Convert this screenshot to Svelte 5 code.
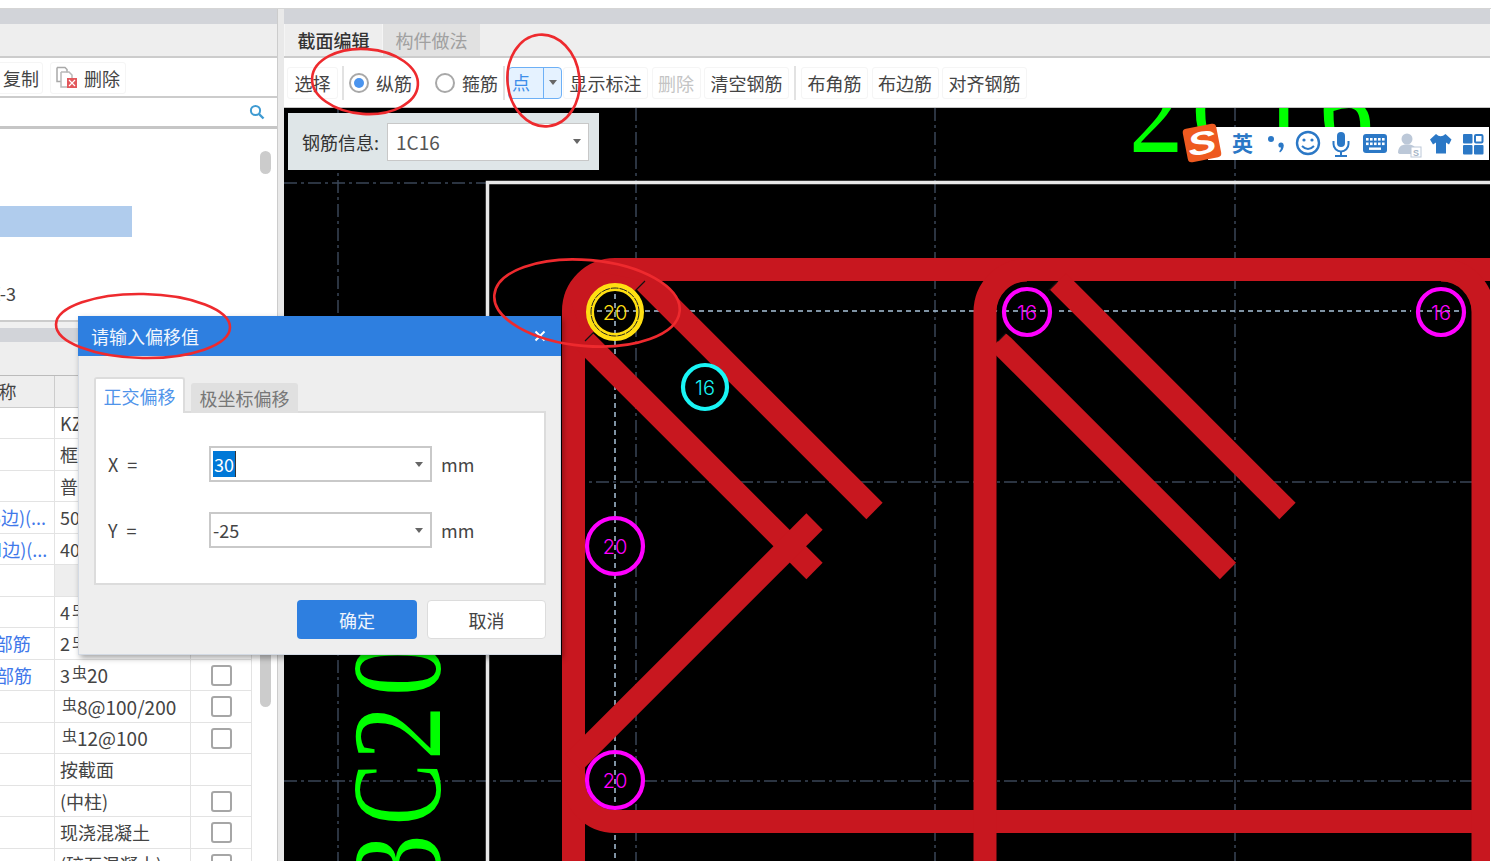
<script>
  // property grid rows: label is scrolled partly out of the panel on the left
  const rows = [
    { label: '名称', value: 'KZ-3' },
    { label: '类型', value: '框架柱' },
    { label: '类别', value: '普通柱' },
    { label: '截面宽度(B边)(...', value: '500', link: true },
    { label: '截面高度(H边)(...', value: '400', link: true },
    { label: '全部纵筋', value: '', shaded: true },
    { label: '角筋', value: '4', bar: '22' },
    { label: 'B边一侧中部筋', value: '2', bar: '20', link: true },
    { label: 'H边一侧中部筋', value: '3', bar: '20', link: true, check: true },
    { label: '箍筋', value: '', bar: '8@100/200', check: true },
    { label: '拉筋', value: '', bar: '12@100', check: true },
    { label: '节点区', value: '按截面' },
    { label: '柱类型', value: '(中柱)', check: true },
    { label: '材质', value: '现浇混凝土', check: true },
    { label: '混凝土类型', value: '(碎石混凝土)', check: true }
  ];

  const tools = [
    { text: '显示标注' },
    { text: '删除', off: true },
    { text: '清空钢筋' },
    { sep: true },
    { text: '布角筋' },
    { text: '布边筋' },
    { text: '对齐钢筋' }
  ];

  // rebar points on the section
  const points = [
    { x: 615, y: 312, r: 27, color: '#ff00ff', label: '20', hidden: true },
    { x: 615, y: 546, r: 28, color: '#ff00ff', label: '20' },
    { x: 615, y: 780, r: 28, color: '#ff00ff', label: '20' },
    { x: 705, y: 387, r: 22, color: '#19f5f5', label: '16' },
    { x: 1027, y: 312, r: 23, color: '#ff00ff', label: '16', disc: 30 },
    { x: 1441, y: 312, r: 23, color: '#ff00ff', label: '16', disc: 30 }
  ];

  // the CAD font has a fixed pitch, so each big glyph gets its own place and width
  const topLabel = [
    { c: '2', at: 1129, sx: 0.85 },
    { c: 'C', at: 1192, sx: 0.72 },
    { c: '1', at: 1255, sx: 0.85 },
    { c: '6', at: 1319, sx: 0.85 }
  ];
  const sideLabel = [
    { c: '3', at: 889, sx: 0.85 },
    { c: 'C', at: 825, sx: 0.72 },
    { c: '2', at: 760, sx: 0.85 },
    { c: '0', at: 696, sx: 0.85 }
  ];

  const keyRows = [138, 142.5];
  const keyCols = [1366, 1370, 1374, 1378, 1382];
</script>

<div class="page">
  <div class="topline"></div>

  <div class="main">
    <section class="left">
      <div class="band"></div>
      <div class="head"></div>
      <div class="lefttools">
        <button class="tool copy">复制</button>
        <button class="tool del">
          <svg width="22" height="23" viewBox="0 0 22 23">
            <path d="M1 1.5h8l2 2v3M1 1.5v14h4" fill="none" stroke="#a9a9a9" stroke-width="1.5" />
            <path d="M5 6h8l3 3v3M5 6v15h6" fill="none" stroke="#b9b9b9" stroke-width="1.5" />
            <rect x="11" y="12" width="10" height="10" fill="#e2585c" />
            <path d="M13 14l6 6M19 14l-6 6" stroke="#fff" stroke-width="1.2" />
          </svg>
          <span>删除</span>
        </button>
      </div>
      <div class="search">
        <svg width="16" height="16" viewBox="0 0 16 16">
          <circle cx="6.5" cy="6.5" r="4.6" fill="none" stroke="#3f9bd2" stroke-width="2" />
          <path d="M10 10l4.5 4.5" stroke="#3f9bd2" stroke-width="2.4" />
        </svg>
      </div>
      <div class="list">
        <div class="listitems">
          <div class="picked"></div>
          <div class="item">KZ-3</div>
        </div>
        <div class="thumb listthumb"></div>
      </div>
      <div class="strip"></div>
      <div class="band second"></div>
      <div class="head second"></div>
      <div class="gridwrap">
        <div class="grid">
          <div class="row header">
            <div class="cell name">属性名称</div>
            <div class="cell"></div>
            <div class="cell"></div>
          </div>
          {#each rows as row}
            <div class="row">
              <div class="cell name" class:link={row.link}>{row.label}</div>
              <div class="cell" class:shaded={row.shaded}>
                {row.value}{#if row.bar}<span class="steel">虫</span><span class="spec">{row.bar}</span>{/if}
              </div>
              <div class="cell box">
                {#if row.check}<span class="checkbox"></span>{/if}
              </div>
            </div>
          {/each}
        </div>
        <div class="gridscroll"><div class="thumb"></div></div>
      </div>
    </section>

    <div class="splitter"></div>

    <section class="right">
      <div class="band"></div>
      <div class="tabs">
        <div class="tab active">截面编辑</div>
        <div class="tab">构件做法</div>
      </div>
      <div class="toolbar">
        <button class="tool pick">选择</button>
        <span class="sep"></span>
        <label class="radio first"><span class="dot on"></span>纵筋</label>
        <label class="radio"><span class="dot"></span>箍筋</label>
        <span class="sep narrow"></span>
        <div class="split">
          <span class="splittext">点</span>
          <span class="splitarrow"><i class="arrow"></i></span>
        </div>
        {#each tools as t}
          {#if t.sep}
            <span class="sep wide"></span>
          {:else}
            <button class="tool" class:off={t.off}>{t.text}</button>
          {/if}
        {/each}
      </div>

      <div class="canvas">
        <svg class="drawing" viewBox="284 108 1207 753" width="1207" height="753">
          <!-- axis lines -->
          <g stroke="#3a4657" stroke-width="1.5" stroke-dasharray="13 4 3 4">
            <line x1="338" y1="108" x2="338" y2="861" />
            <line x1="636" y1="108" x2="636" y2="861" />
            <line x1="935" y1="108" x2="935" y2="861" />
            <line x1="1235" y1="108" x2="1235" y2="861" />
            <line x1="284" y1="183" x2="486" y2="183" />
            <line x1="284" y1="482" x2="1491" y2="482" />
            <line x1="284" y1="781" x2="1491" y2="781" />
          </g>

          <!-- big labels -->
          {#each topLabel as g}
            <text class="biglabel" transform="translate({g.at} 152) scale({g.sx} 1)">{g.c}</text>
          {/each}
          {#each sideLabel as g}
            <text class="biglabel" transform="translate(440 {g.at}) rotate(-90) scale({g.sx} 1)">{g.c}</text>
          {/each}

          <path d="M487.5 861V182.5H1491" fill="none" stroke="#e8e8e8" stroke-width="3.5" />

          <!-- section edges -->
          <g stroke="#a9c3da" stroke-width="1.5" stroke-dasharray="5 4">
            <line x1="645" y1="311" x2="1472" y2="311" />
            <line x1="615" y1="340" x2="615" y2="861" />
          </g>

          <!-- stirrups -->
          <g fill="none" stroke="#c8171f" stroke-width="23">
            <path d="M573.5 861V311A41.5 41.5 0 0 1 615 269.5H1491" />
            <path d="M573.5 780A41.5 41.5 0 0 0 615 821.5H1491" />
            <path d="M985 861V312A42 42 0 0 1 1027 270" />
            <path d="M1483 861V312A42 42 0 0 0 1441 270" />
            <path d="M644.75 281.25L874.5 511" />
            <path d="M584.75 341.25L814.5 571" />
            <path d="M814.5 521.5L573.5 762.5" />
            <path d="M1058 281.5L1287.5 511" />
            <path d="M998 341L1228 571" />
          </g>
          <path d="M585 341L645 281L600 272L570 300Z" fill="#c8171f" />
          <path d="M585 341L645 281M998 341L1057 282" stroke="#111" stroke-width="1.2" />

          {#each points as p}
            <circle cx={p.x} cy={p.y} r={p.disc || p.r} fill="#000" />
            {#if p.x === 615}
              <line x1={p.x} y1={p.y - p.r} x2={p.x} y2={p.y + p.r} stroke="#a9c3da" stroke-width="1.5" stroke-dasharray="5 4" />
            {/if}
            {#if p.y === 312}
              <line x1={p.x - p.r} y1="311" x2={p.x + p.r} y2="311" stroke="#a9c3da" stroke-width="1.5" stroke-dasharray="5 4" />
            {/if}
            {#if !p.hidden}
              <circle cx={p.x} cy={p.y} r={p.r} fill="none" stroke={p.color} stroke-width="4.2" />
              <text class="mark" x={p.x} y={p.y + 7.5} fill={p.color}>{p.label}</text>
            {/if}
          {/each}

          <!-- selected point -->
          <circle cx="615" cy="312" r="25" fill="none" stroke="#ffdf12" stroke-width="8" />
          <circle cx="615" cy="312" r="24" fill="none" stroke="#222" stroke-width="1" stroke-dasharray="8 1" />
          <text class="mark" x="615" y="319.500" fill="#ffdf12">20</text>
        </svg>

        <div class="barinfo">
          <span>钢筋信息:</span>
          <div class="select"><span>1C16</span><i class="arrow"></i></div>
        </div>

        <!-- input method bar lies over the drawing -->
        <div class="ime">
          <div class="imelogo"><span>S</span></div>
          <svg class="imebar" viewBox="1208 127 281 33" width="281" height="33">
            <g fill="#2b78c6">
              <text class="imetext" x="1242.5" y="151">英</text>
              <circle cx="1271" cy="139" r="3" />
              <circle cx="1281" cy="145" r="2.6" />
              <path d="M1283.5 145c.5 3-1 6-3.5 7.5l-.8-1.2c1.4-1.3 2-3 1.8-4.8z" />

              <rect x="1337" y="132" width="8" height="15" rx="4" />
              <path d="M1340 151h2v4h5v2h-12v-2h5z" />

              <rect x="1363" y="134" width="24" height="19" rx="3" />

              <path d="M1436 134L1430 139.5L1433 144.5L1436 142.5V153.5H1446V142.5L1449 144.5L1451.5 139.5L1445.5 134Q1440.5 138.5 1436 134Z" />

              <rect x="1463" y="134" width="9.5" height="9.5" rx="1" />
              <rect x="1463" y="145" width="9.5" height="9.5" rx="1" />
              <rect x="1474" y="145" width="9.5" height="9.5" rx="1" />
            </g>
            <rect x="1475" y="135" width="7.5" height="7.5" rx="1" fill="none" stroke="#2b78c6" stroke-width="2" />

            <circle cx="1308" cy="143" r="11" fill="none" stroke="#2b78c6" stroke-width="2.4" />
            <circle cx="1304" cy="140" r="1.6" fill="#2b78c6" />
            <circle cx="1312" cy="140" r="1.6" fill="#2b78c6" />
            <path d="M1302 146q6 6 12 0" fill="none" stroke="#2b78c6" stroke-width="2" />

            <path d="M1333.5 141v3a7.5 7.5 0 0 0 15 0v-3" fill="none" stroke="#2b78c6" stroke-width="2" />

            {#each keyRows as y}
              {#each keyCols as x}
                <rect {x} {y} width="2.6" height="2.6" fill="#fff" />
              {/each}
            {/each}
            <rect x="1369" y="147.5" width="12" height="2.4" fill="#fff" />

            <circle cx="1407" cy="139" r="5.5" fill="#bcc8d8" />
            <path d="M1398 153c0-6 3-8.500 9-8.500s8 2 8 4v5.500h-15.500z" fill="#bcc8d8" />
            <rect x="1411" y="147" width="10" height="10" fill="#fff" stroke="#bcc8d8" stroke-width="1" />
            <text class="imesmall" x="1416" y="155.500">S</text>
          </svg>
        </div>
      </div>
    </section>
  </div>

  <div class="dialog">
    <header class="dialoghead">
      <span>请输入偏移值</span>
      <svg width="12" height="12" viewBox="0 0 12 12"><path d="M1.500 1.500l9 9M10.500 1.500l-9 9" stroke="#fff" stroke-width="2" /></svg>
    </header>
    <div class="dialogbody">
      <div class="dtabs">
        <div class="dtab active">正交偏移</div>
        <div class="dtab">极坐标偏移</div>
      </div>
      <div class="dpanel">
        <div class="field">
          <span class="fieldname">X =</span>
          <div class="input"><span class="selected">30</span><i class="arrow"></i></div>
          <span class="unit">mm</span>
        </div>
        <div class="field">
          <span class="fieldname">Y =</span>
          <div class="input"><span class="plain">-25</span><i class="arrow"></i></div>
          <span class="unit">mm</span>
        </div>
      </div>
      <div class="actions">
        <button class="ok">确定</button>
        <button class="cancel">取消</button>
      </div>
    </div>
  </div>

  <!-- hand drawn marks on the screenshot -->
  <svg class="marks" viewBox="0 0 1491 861" width="1491" height="861">
    <g fill="none" stroke="#ee2a2e" stroke-width="2.6">
      <ellipse cx="365" cy="81.500" rx="53" ry="32.500" transform="rotate(4 365 81.500)" />
      <ellipse cx="543.500" cy="80.500" rx="36" ry="46" transform="rotate(-6 543.500 80.500)" />
      <ellipse cx="143" cy="326" rx="87" ry="32" transform="rotate(1 143 326)" />
      <ellipse cx="587" cy="303" rx="93" ry="43" transform="rotate(5 587 303)" />
    </g>
  </svg>
</div>

<style>
  :global(body) {
    margin: 0;
    background: #fff;
  }

  .page {
    position: relative;
    width: 1491px;
    height: 861px;
    overflow: hidden;
    background: #fff;
    color: #444;
    font-family: "Noto Sans CJK SC", "Noto Sans", sans-serif;
    font-size: 18px;
  }

  button {
    font: inherit;
    color: inherit;
    background: none;
  }

  .topline {
    height: 8px;
    border-bottom: 1px solid #d5d5d5;
  }

  .main {
    display: flex;
    height: 852px;
  }

  .left {
    display: flex;
    flex-direction: column;
    width: 277px;
    flex: none;
  }

  .splitter {
    width: 7px;
    flex: none;
    background: #e9e9e9;
    border-left: 1px solid #ccc;
    box-sizing: border-box;
  }

  .right {
    flex: 1;
    display: flex;
    flex-direction: column;
    min-width: 0;
    border-right: 1px solid #fff;
  }

  .band {
    height: 15px;
    flex: none;
    background: #d2d4d9;
  }

  .head {
    height: 32px;
    flex: none;
    background: #eee;
    border-bottom: 2px solid #ccc;
  }

  .lefttools {
    height: 40px;
    flex: none;
    box-sizing: border-box;
    padding-top: 1px;
    display: flex;
    align-items: center;
    border-bottom: 2px solid #ccc;
  }

  .tool {
    height: 32px;
    padding: 0 6px;
    border: 1px solid #f5f5f5;
    border-radius: 3px;
    white-space: nowrap;
    line-height: 1;
  }

  .tool.off {
    color: #c4c4c4;
  }

  .copy {
    margin-left: -4px;
    width: 47px;
  }

  .del {
    display: flex;
    align-items: center;
    gap: 6px;
    margin-left: 7px;
    padding: 0 5px;
  }

  .search {
    height: 28px;
    flex: none;
    display: flex;
    align-items: center;
    justify-content: flex-end;
    padding-right: 12px;
    border-bottom: 3px solid #c6c6c6;
    box-sizing: content-box;
  }

  .list {
    height: 191px;
    flex: none;
    display: flex;
    justify-content: space-between;
  }

  .listitems {
    padding-top: 77px;
  }

  .picked {
    width: 132px;
    height: 31px;
    background: #b0cced;
  }

  .item {
    margin: 41px 0 0 -22px;
    line-height: 30px;
  }

  .thumb {
    width: 11px;
    background: #ccc;
    border-radius: 6px;
  }

  .listthumb {
    height: 23px;
    margin: 22px 6px 0 0;
  }

  .strip {
    height: 8px;
    flex: none;
    box-sizing: border-box;
    background: #f0f0f0;
    border-top: 2px solid #ccc;
  }

  .band.second {
    height: 14px;
  }

  .head.second {
    height: 34px;
    border-bottom: 1px solid #bbb;
    box-sizing: border-box;
  }

  .gridwrap {
    flex: 1;
    min-height: 0;
    display: flex;
    overflow: hidden;
  }

  .grid {
    flex: none;
    width: 341px;
    margin-left: -89px;
  }

  .row {
    display: grid;
    grid-template-columns: 144px 136px 61px;
    height: 31.5px;
    box-sizing: border-box;
    border-bottom: 1.5px solid #e3e3e3;
  }

  .cell {
    display: flex;
    align-items: center;
    padding-left: 5px;
    box-sizing: border-box;
    border-right: 1.5px solid #e3e3e3;
    white-space: pre;
    overflow: hidden;
    min-width: 0;
  }

  .cell.name {
    padding-left: 0;
  }

  .header {
    background: #eee;
    border-bottom-color: #ccc;
  }

  .header .cell {
    border-right-color: #ccc;
  }

  .header .name {
    justify-content: center;
    padding-right: 4px;
  }

  .link {
    color: #3f78ea;
  }

  .shaded {
    background: #eee;
  }

  .steel {
    font-size: 15px;
    position: relative;
    top: -3px;
    margin: 0 0 0 2px;
  }

  .spec {
    font-size: 19px;
  }

  .box {
    justify-content: center;
    padding-left: 0;
    padding-right: 0;
  }

  .checkbox {
    width: 17px;
    height: 17px;
    border: 2px solid #a6a6a6;
    border-radius: 3px;
    margin-top: 1px;
  }

  .gridscroll {
    flex: 1;
    padding: 264px 6px 0 8px;
    background: #fff;
  }

  .gridscroll .thumb {
    height: 67px;
  }

  .tabs {
    height: 32px;
    flex: none;
    display: flex;
    background: #eee;
    border-bottom: 2px solid #ccc;
  }

  .tab {
    width: 97px;
    display: flex;
    align-items: center;
    justify-content: center;
    color: #a0a0a0;
    background: #e1e1e1;
    border-left: 1px solid #f5f5f5;
  }

  .tab.active {
    color: #333;
    background: #eee;
    font-weight: 500;
  }

  .toolbar {
    height: 50px;
    flex: none;
    box-sizing: border-box;
    display: flex;
    align-items: center;
    padding: 0 0 0 3px;
    background: #fff;
    border-bottom: 1px solid #c4c4c4;
  }

  .sep {
    width: 2px;
    height: 34px;
    margin: 0 4px;
    background: #e2e2e2;
    flex: none;
  }

  .sep.narrow {
    margin: 0 3px 0 5px;
  }

  .sep.wide {
    margin: 0 5px 0 1.5px;
  }

  .toolbar .tool {
    margin-right: 3.5px;
    padding: 0 5.500px;
  }

  .toolbar .pick {
    margin-right: 0;
    width: 51px;
    padding: 0;
  }

  .radio {
    display: flex;
    align-items: center;
    gap: 7px;
    margin-left: 23px;
    white-space: nowrap;
  }

  .radio.first {
    margin-left: 1px;
  }

  .dot {
    width: 20px;
    height: 20px;
    box-sizing: border-box;
    border: 2px solid #a8a8a8;
    border-radius: 50%;
    background: #fff;
    display: flex;
    align-items: center;
    justify-content: center;
  }

  .dot.on::after {
    content: "";
    width: 10px;
    height: 10px;
    border-radius: 50%;
    background: #4a94ee;
  }

  .split {
    display: flex;
    width: 54px;
    height: 32px;
    margin-right: 1px;
    box-sizing: border-box;
    background: #e5f2ff;
    border: 1.5px solid #6db0f6;
    border-radius: 4px;
    color: #3d8eea;
  }

  .splittext {
    width: 35px;
    padding-left: 3px;
    box-sizing: border-box;
    line-height: 29px;
    border-right: 1.5px solid #6db0f6;
  }

  .splitarrow {
    flex: 1;
    display: flex;
    align-items: center;
    justify-content: center;
  }

  .arrow {
    display: block;
    width: 0;
    height: 0;
    border: 4px solid transparent;
    border-top: 5px solid #666;
    border-bottom: 0;
  }

  .canvas {
    position: relative;
    flex: 1;
    min-height: 0;
    background: #000;
    overflow: hidden;
  }

  .drawing {
    display: block;
  }

  .biglabel {
    font-family: "Liberation Serif", serif;
    font-size: 128px;
    fill: #00ff00;
  }

  .mark {
    font-family: Inter, "Liberation Sans", sans-serif;
    font-weight: 300;
    font-size: 20px;
    text-anchor: middle;
  }

  .barinfo {
    position: absolute;
    left: 4px;
    top: 5px;
    width: 311px;
    height: 57px;
    box-sizing: border-box;
    padding-left: 14px;
    display: flex;
    align-items: center;
    gap: 8px;
    background: #dfe6e8;
    color: #333;
  }

  .select {
    width: 202px;
    height: 38px;
    box-sizing: border-box;
    display: flex;
    align-items: center;
    justify-content: space-between;
    padding: 0 7px 0 8px;
    background: #fff;
    border: 1.5px solid #c8c8c8;
    color: #555;
    font-size: 19px;
  }

  .ime {
    position: absolute;
    left: 898px;
    top: 18px;
    display: flex;
    align-items: center;
  }

  .imelogo {
    width: 34px;
    height: 34px;
    flex: none;
    position: relative;
    z-index: 1;
    margin-left: 3px;
    border-radius: 4px;
    background: #ee5a20;
    transform: rotate(-11deg);
    display: flex;
    align-items: center;
    justify-content: center;
    color: #fff;
    font: italic 700 32px "Liberation Sans", sans-serif;
  }

  .imelogo span {
    display: block;
    transform: scaleX(1.35);
  }

  .imebar {
    display: block;
    margin-left: -11px;
    background: #fff;
  }

  .imetext {
    font-size: 21px;
    font-weight: 700;
    text-anchor: middle;
  }

  .imesmall {
    font: 700 9px "Liberation Sans", sans-serif;
    fill: #a5b4c6;
    text-anchor: middle;
  }

  .dialog {
    position: absolute;
    left: 78px;
    top: 316px;
    width: 483px;
    height: 339px;
    display: flex;
    flex-direction: column;
    box-shadow: 2px 3px 6px rgba(0, 0, 0, 0.35);
  }

  .dialoghead {
    height: 40px;
    flex: none;
    box-sizing: border-box;
    display: flex;
    align-items: center;
    justify-content: space-between;
    padding: 0 15px 0 13px;
    background: #2e7fe0;
    color: #f1f6fd;
  }

  .dialogbody {
    flex: 1;
    padding: 21px 14px 0 15px;
    background: #eee;
    border: 1px solid #d3dae4;
    border-top: 0;
  }

  .dtabs {
    display: flex;
    align-items: flex-end;
    gap: 6px;
    height: 36px;
    margin-bottom: -2px;
    position: relative;
  }

  .dtab {
    width: 107px;
    height: 30px;
    display: flex;
    align-items: center;
    justify-content: center;
    background: #e0e0e0;
    border-radius: 3px 3px 0 0;
    color: #777;
  }

  .dtab.active {
    width: 91px;
    height: 36px;
    box-sizing: border-box;
    background: #fff;
    color: #4f94ea;
    border: 2px solid #dcdcdc;
    border-bottom: 0;
  }

  .dpanel {
    box-sizing: border-box;
    height: 174px;
    padding: 33px 0 0 12px;
    background: #fff;
    border: 2px solid #dcdcdc;
  }

  .field {
    display: flex;
    align-items: center;
    height: 36px;
    margin-bottom: 30px;
  }

  .fieldname {
    width: 101px;
    flex: none;
    word-spacing: 5px;
  }

  .input {
    width: 223px;
    height: 36px;
    box-sizing: border-box;
    display: flex;
    align-items: center;
    justify-content: space-between;
    padding: 0 7px 0 2px;
    border: 2px solid #c9c9c9;
  }

  .selected {
    padding: 0 1px;
    background: #0078d7;
    color: #fff;
    line-height: 26px;
    border-right: 1px solid #333;
  }

  .plain {
    line-height: 26px;
  }

  .unit {
    margin-left: 9px;
  }

  .actions {
    display: flex;
    justify-content: flex-end;
    gap: 10px;
    margin-top: 15px;
  }

  .actions button {
    height: 39px;
    line-height: 1;
    border-radius: 4px;
  }

  .ok {
    width: 120px;
    border: 0;
    background: #2e7fe0;
    color: #eef4fc;
  }

  .cancel {
    width: 119px;
    background: #fff;
    border: 1.5px solid #dcdcdc;
  }

  .marks {
    position: absolute;
    left: 0;
    top: 0;
    pointer-events: none;
  }
</style>
